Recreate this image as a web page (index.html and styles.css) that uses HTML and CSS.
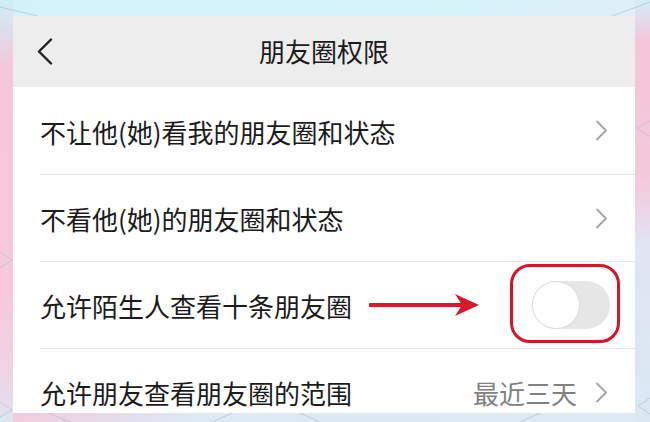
FILE: index.html
```html
<!DOCTYPE html>
<html lang="zh-CN">
<head>
<meta charset="utf-8">
<title>朋友圈权限</title>
<link rel="stylesheet" href="styles.css">
</head>
<body>
<svg class="bg-lines" width="650" height="422" viewBox="0 0 650 422">
  <g stroke="#b7c2cf" stroke-width="1" fill="none" opacity="0.7">
    <line x1="0" y1="7" x2="38" y2="16"/>
    <line x1="612" y1="16" x2="650" y2="2"/>
    <polyline points="650,121 636,128 650,136"/>
    <polyline points="0,252 12,260 0,268"/>
    <polyline points="0,402 12,410 0,417"/>
    <line x1="48" y1="413" x2="70" y2="422"/>
    <line x1="212" y1="422" x2="232" y2="413"/>
    <line x1="300" y1="413" x2="320" y2="422"/>
    <line x1="520" y1="422" x2="540" y2="413"/>
    <polyline points="650,398 638,406 650,414"/>
  </g>
</svg>
<main class="card">
  <header class="topbar">
    <div class="back">
      <svg width="16" height="27" viewBox="0 0 16 27"><polyline points="14,1.5 2,13.5 14,25.5" fill="none" stroke="#222" stroke-width="2.4" stroke-linecap="round" stroke-linejoin="round"/></svg>
    </div>
    <h1 class="title">朋友圈权限</h1>
    <div></div>
  </header>
  <div class="row">
    <span class="label">不让他(她)看我的朋友圈和状态</span>
    <svg class="chev" width="13" height="21" viewBox="0 0 13 21"><polyline points="2,1.5 11,10.5 2,19.5" fill="none" stroke="#a3a3a3" stroke-width="1.8" stroke-linecap="round" stroke-linejoin="round"/></svg>
  </div>
  <div class="row">
    <span class="label">不看他(她)的朋友圈和状态</span>
    <svg class="chev" width="13" height="21" viewBox="0 0 13 21"><polyline points="2,1.5 11,10.5 2,19.5" fill="none" stroke="#a3a3a3" stroke-width="1.8" stroke-linecap="round" stroke-linejoin="round"/></svg>
  </div>
  <div class="row row-toggle">
    <span class="label">允许陌生人查看十条朋友圈</span>
    <svg class="arrow" width="110" height="24" viewBox="0 0 110 24"><line x1="1" y1="12" x2="96" y2="12" stroke="#d81b2b" stroke-width="4" stroke-linecap="round"/><polygon points="86,1 110,12 86,23 93,12" fill="#d81b2b"/></svg>
    <div class="toggle">
      <span class="knob"></span>
      <span class="highlight"></span>
    </div>
  </div>
  <div class="row">
    <span class="label">允许朋友查看朋友圈的范围</span>
    <span class="value">最近三天</span>
    <svg class="chev" width="13" height="21" viewBox="0 0 13 21"><polyline points="2,1.5 11,10.5 2,19.5" fill="none" stroke="#a3a3a3" stroke-width="1.8" stroke-linecap="round" stroke-linejoin="round"/></svg>
  </div>
</main>
</body>
</html>
```
FILE: styles.css
```css
html, body {
  margin: 0;
  padding: 0;
}
body {
  width: 650px;
  height: 422px;
  overflow: hidden;
  position: relative;
  box-sizing: border-box;
  padding: 16px 15px 9px 13px;
  font-family: "Noto Sans CJK SC", "Noto Sans", sans-serif;
  background-color: #d6eef7;
  background-image:
    linear-gradient(180deg, #cdeff8 0%, #f3c7da 16%, #f7c8dc 70%, #ecd6e6 90%, #dfe4f1 100%),
    linear-gradient(180deg, #d3eef8 0%, #f5c4d8 10%, #f4c8db 42%, #e1e4f3 58%, #dae8f4 100%),
    linear-gradient(90deg, #f3cadc 0%, #dde9f5 30%, #dbeaf5 100%),
    linear-gradient(90deg, #d2f2fa 0%, #d6f3fa 70%, #dfeef9 100%);
  background-size: 13px 100%, 15px 100%, 100% 9px, 100% 16px;
  background-position: left top, right top, left bottom, left top;
  background-repeat: no-repeat;
}
.bg-lines {
  position: absolute;
  left: 0;
  top: 0;
}
.card {
  position: relative;
  z-index: 1;
  width: 622px;
  height: 397px;
  overflow: hidden;
  background: #ffffff;
  display: flex;
  flex-direction: column;
}
.topbar {
  flex: 0 0 71px;
  background: #ededed;
  display: grid;
  grid-template-columns: 1fr auto 1fr;
  align-items: center;
  padding: 0 24px;
}
.back {
  display: flex;
  align-items: center;
}
.title {
  margin: 0;
  font-size: 26px;
  font-weight: 400;
  color: #1b1b1b;
  line-height: 1;
  padding-bottom: 2px;
}
.row {
  flex: 0 0 87px;
  box-sizing: border-box;
  margin-left: 27px;
  padding-right: 27px;
  display: flex;
  align-items: center;
  border-top: 1px solid #e6e6e6;
}
.topbar + .row {
  border-top: none;
  flex-basis: 87px;
}
.label {
  font-size: 26px;
  color: #1b1b1b;
  line-height: 1;
  flex: 1 1 auto;
  padding-top: 2px;
}
.value {
  font-size: 26px;
  color: #818181;
  line-height: 1;
  margin-right: 18px;
  padding-top: 2px;
}
.chev {
  flex: 0 0 auto;
}
.row-toggle .label {
  flex: 0 0 auto;
}
.arrow {
  margin-left: 17px;
  flex: 0 0 auto;
}
.toggle {
  position: relative;
  margin-left: auto;
  margin-right: -2px;
  width: 78px;
  height: 48px;
  border-radius: 24px;
  background: #e6e6e6;
}
.knob {
  position: absolute;
  left: 0;
  top: 0;
  width: 48px;
  height: 48px;
  box-sizing: border-box;
  border-radius: 50%;
  background: #ffffff;
  border: 1.5px solid #dcdcdc;
}
.highlight {
  position: absolute;
  left: -22px;
  top: -17px;
  width: 110px;
  height: 79px;
  box-sizing: border-box;
  border: 3.5px solid #d3152a;
  border-radius: 20px;
}
```
